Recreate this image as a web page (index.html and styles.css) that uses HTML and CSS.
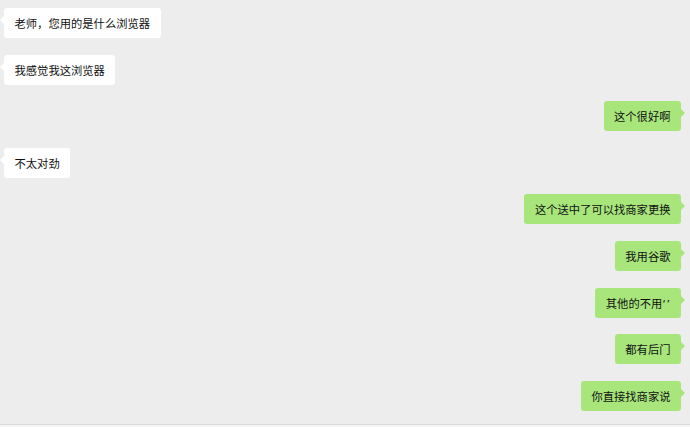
FILE: index.html
```html
<!DOCTYPE html>
<html lang="zh-CN">
<head>
<meta charset="utf-8">
<title>聊天</title>
<link rel="stylesheet" href="styles.css">
</head>
<body>
<div class="page">
  <div class="chat">
    <div class="row left"><div class="bubble">老师，您用的是什么浏览器</div></div>
    <div class="row left"><div class="bubble">我感觉我这浏览器</div></div>
    <div class="row right"><div class="bubble">这个很好啊</div></div>
    <div class="row left"><div class="bubble">不太对劲</div></div>
    <div class="row right"><div class="bubble">这个送中了可以找商家更换</div></div>
    <div class="row right"><div class="bubble">我用谷歌</div></div>
    <div class="row right"><div class="bubble">其他的不用<span class="latin">‘’</span></div></div>
    <div class="row right"><div class="bubble">都有后门</div></div>
    <div class="row right"><div class="bubble">你直接找商家说</div></div>
  </div>
  <div class="footer"></div>
</div>
</body>
</html>
```
FILE: styles.css
```css
html, body {
  margin: 0;
  padding: 0;
}
body {
  background: #ededed;
  font-family: "Noto Sans CJK SC", "Noto Sans", sans-serif;
  color: #111;
}
.page {
  width: 690px;
  height: 427px;
  display: flex;
  flex-direction: column;
  overflow: hidden;
}
.chat {
  flex: 1;
  display: flex;
  flex-direction: column;
  gap: 16.6px;
  padding: 8px 9px 0 4px;
}
.row {
  display: flex;
}
.row.left {
  justify-content: flex-start;
}
.row.right {
  justify-content: flex-end;
}
.bubble {
  position: relative;
  height: 30px;
  line-height: 30px;
  padding: 0 10.5px;
  font-size: 11.3px;
  border-radius: 3px;
  white-space: nowrap;
}
.latin {
  font-family: "DejaVu Sans", sans-serif;
  letter-spacing: 0.5px;
}
.left .bubble {
  background: #ffffff;
}
.right .bubble {
  background: #a8e67c;
}
.bubble::before {
  content: "";
  position: absolute;
  top: 8px;
  width: 0;
  height: 0;
  border-top: 4px solid transparent;
  border-bottom: 4px solid transparent;
}
.left .bubble::before {
  left: -4px;
  border-right: 4px solid #ffffff;
}
.right .bubble::before {
  right: -4px;
  border-left: 4px solid #a8e67c;
}
.footer {
  height: 2px;
  border-top: 1px solid #dadada;
  background: #f4f4f4;
}
```
